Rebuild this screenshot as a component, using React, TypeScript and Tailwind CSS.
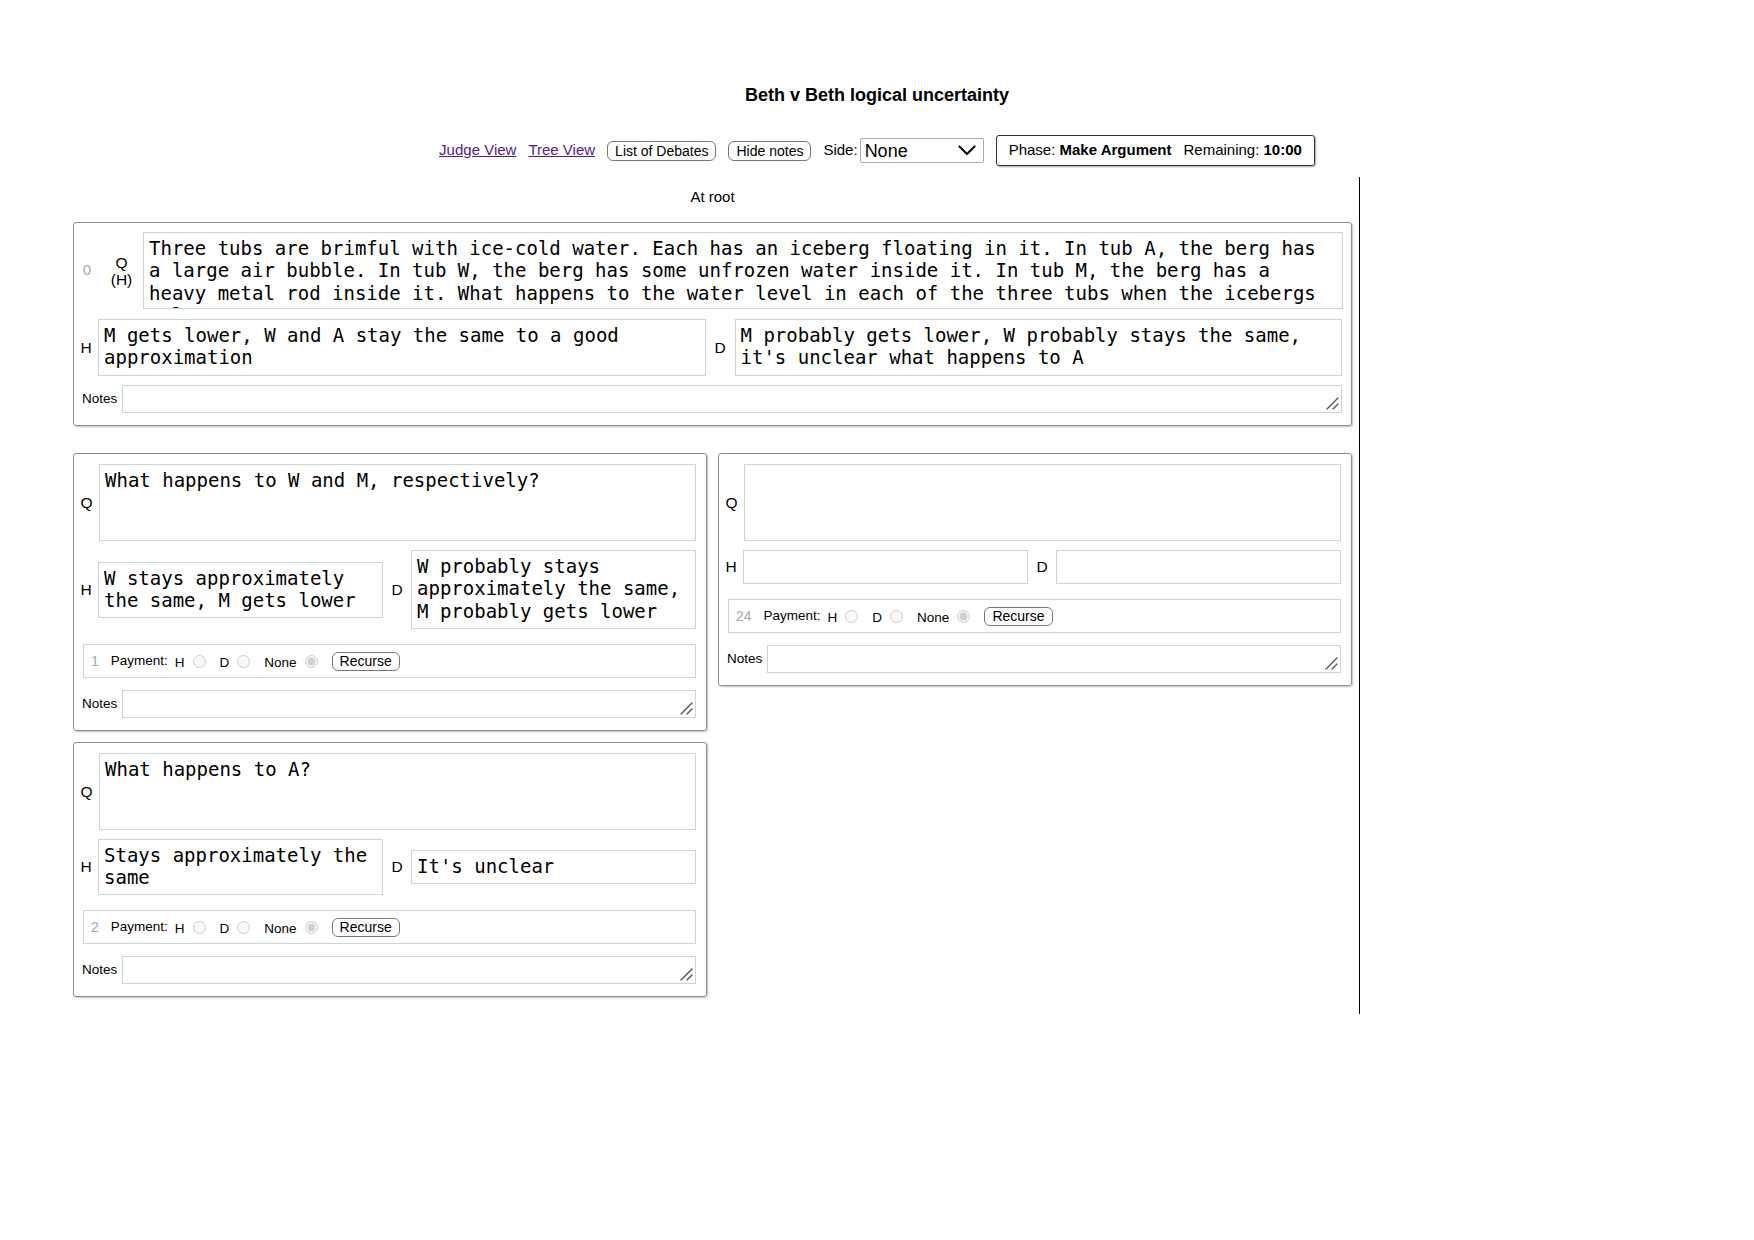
import { useState } from 'react';

type Child = {
  id: number;
  q: string;
  h: string;
  d: string;
  hLines: number;
  dLines: number;
};

// heights of auto-sized answer boxes, by number of text lines
const answerHeight: Record<number, string> = {
  1: 'h-[34px]',
  2: 'h-[56px]',
  3: 'h-[79px]',
};

const leftChildren: Child[] = [
  {
    id: 1,
    q: 'What happens to W and M, respectively?',
    h: 'W stays approximately the same, M gets lower',
    d: 'W probably stays approximately the same, M probably gets lower',
    hLines: 2,
    dLines: 3,
  },
  {
    id: 2,
    q: 'What happens to A?',
    h: 'Stays approximately the same',
    d: "It's unclear",
    hLines: 2,
    dLines: 1,
  },
];

const emptyChild: Child = { id: 24, q: '', h: '', d: '', hLines: 1, dLines: 1 };

const rootQuestion =
  'Three tubs are brimful with ice-cold water. Each has an iceberg floating in it. In tub A, the berg has a large air bubble. In tub W, the berg has some unfrozen water inside it. In tub M, the berg has a heavy metal rod inside it. What happens to the water level in each of the three tubs when the icebergs melt?';

function Field({ value, className }: { value: string; className: string }) {
  return (
    <textarea
      readOnly
      value={value}
      className={`block min-w-0 resize-none overflow-hidden border border-[#c6d7d4] bg-white px-[5px] pt-[4px] pb-[6px] font-['DejaVu_Sans_Mono',monospace] text-[19px] leading-[22.4px] text-black outline-none ${className}`}
    />
  );
}

function NotesRow({ className }: { className: string }) {
  return (
    <div className={`flex items-center ${className}`}>
      <span className="w-[48px] shrink-0 pl-[8px] text-[13.5px]">Notes</span>
      <div className="relative min-w-0 flex-1">
        <textarea className="block h-[28px] w-full resize-none border border-[#c6d7d4] bg-white outline-none" />
        {/* resize grip */}
        <svg className="absolute right-[3px] bottom-[3px]" width="13" height="13" viewBox="0 0 13 13" stroke="#555" strokeWidth="1.4" strokeLinecap="round">
          <line x1="1" y1="12" x2="12" y2="1" />
          <line x1="7" y1="12" x2="12" y2="7" />
        </svg>
      </div>
    </div>
  );
}

function Radio({ name, checked }: { name: string; checked?: boolean }) {
  return (
    <input
      type="radio"
      name={name}
      disabled
      defaultChecked={checked}
      className="m-0 ml-[8px] h-[13px] w-[13px]"
    />
  );
}

function PaymentRow({ id }: { id: number }) {
  const name = `pay-${id}`;
  return (
    <div className="mt-[15px] ml-[9px] flex h-[34px] items-center border border-[#c6d7d4] pl-[7px] text-[13.5px]">
      <span className="text-[14px] text-[#a8a8a8]">{id}</span>
      <span className="ml-[12px]">Payment:</span>
      <span className="ml-[7px] pt-[4px]">H</span>
      <Radio name={name} />
      <span className="ml-[14px] pt-[4px]">D</span>
      <Radio name={name} />
      <span className="ml-[14px] pt-[4px]">None</span>
      <Radio name={name} checked />
      <button className="ml-[14px] rounded-[6px] border border-[#777] bg-white px-[7px] text-[14px] leading-[17px]">
        Recurse
      </button>
    </div>
  );
}

function ChildBox({ node }: { node: Child }) {
  return (
    <div className="rounded-[3px] border border-[#8f8f8f] pt-[10px] pr-[10px] pb-[12px] shadow-[1px_1px_2px_rgba(0,0,0,0.25)]">
      <div className="flex items-center">
        <span className="w-[25px] shrink-0 text-center text-[15.5px]">Q</span>
        <Field value={node.q} className="h-[77px] flex-1" />
      </div>
      <div className="mt-[9px] flex items-center">
        <span className="w-[24px] shrink-0 text-center text-[15.5px]">H</span>
        <Field value={node.h} className={`flex-1 ${answerHeight[node.hLines]}`} />
        <span className="w-[28px] shrink-0 text-center text-[15.5px]">D</span>
        <Field value={node.d} className={`flex-1 ${answerHeight[node.dLines]}`} />
      </div>
      <PaymentRow id={node.id} />
      <NotesRow className="mt-[12px]" />
    </div>
  );
}

function SideSelect() {
  return (
    <div className="flex items-center gap-[2px]">
      <span className="text-[15px]">Side:</span>
      <div className="flex h-[25px] w-[124px] items-center justify-between rounded-[2px] border border-[#aaa] bg-white pr-[7px] pl-[4px]">
        <span className="text-[18px] leading-[20px]">None</span>
        <svg width="18" height="11" viewBox="0 0 18 11" fill="none" stroke="#111" strokeWidth="2.2" strokeLinecap="round" strokeLinejoin="round">
          <polyline points="1.5,1.5 9,9 16.5,1.5" />
        </svg>
      </div>
    </div>
  );
}

export default function App() {
  const [showNotes] = useState(true);

  return (
    <div className="min-h-[1240px] w-[1754px] bg-white font-['Liberation_Sans',Arial,sans-serif] text-black">
      <h1 className="pt-[84px] text-center text-[18px] leading-[22px] font-bold">Beth v Beth logical uncertainty</h1>

      {/* top bar */}
      <div className="mt-[29px] flex h-[31px] items-center justify-center gap-[12px]">
        <a href="#" className="text-[15px] text-[#551a8b] underline">Judge View</a>
        <a href="#" className="text-[15px] text-[#551a8b] underline">Tree View</a>
        <button className="rounded-[6px] border border-[#777] bg-white px-[7px] text-[14px] leading-[18px]">List of Debates</button>
        <button className="rounded-[6px] border border-[#777] bg-white px-[7px] text-[14px] leading-[18px]">
          {showNotes ? 'Hide notes' : 'Show notes'}
        </button>
        <SideSelect />
        <div className="flex h-[31px] items-center gap-[12px] rounded-[3px] border border-[#333] px-[12px] text-[15px] shadow-[1px_1px_2px_rgba(0,0,0,0.35)]">
          <span>
            Phase: <b>Make Argument</b>
          </span>
          <span>
            Remaining: <b>10:00</b>
          </span>
        </div>
      </div>

      <div className="mt-[11px] flex">
        <div className="ml-[73px] w-[1279px] pb-[17px]">
          <div className="pt-[11px] text-center text-[15px] leading-[17px]">At root</div>

          {/* root node */}
          <div className="mt-[17px] rounded-[3px] border border-[#8f8f8f] pt-[9px] pb-[12px] shadow-[1px_1px_2px_rgba(0,0,0,0.25)]">
            <div className="flex items-center pr-[8px]">
              <span className="w-[26px] shrink-0 text-center text-[15px] text-[#a8a8a8]">0</span>
              <span className="w-[43px] shrink-0 text-center text-[15.5px] leading-[17px]">
                Q
                <br />
                (H)
              </span>
              <Field value={rootQuestion} className="h-[77px] flex-1" />
            </div>
            <div className="mt-[10px] flex items-center pr-[9px]">
              <span className="w-[24px] shrink-0 text-center text-[15.5px]">H</span>
              <Field value="M gets lower, W and A stay the same to a good approximation" className="h-[57px] flex-1" />
              <span className="w-[29px] shrink-0 text-center text-[15.5px]">D</span>
              <Field value="M probably gets lower, W probably stays the same, it's unclear what happens to A" className="h-[57px] flex-1" />
            </div>
            <NotesRow className="mt-[9px] pr-[9px]" />
          </div>

          {/* children */}
          <div className="mt-[27px] grid grid-cols-2 items-start gap-x-[11px]">
            <div className="flex flex-col gap-[11px]">
              {leftChildren.map((c) => (
                <ChildBox key={c.id} node={c} />
              ))}
            </div>
            <div className="flex flex-col">
              <ChildBox node={emptyChild} />
            </div>
          </div>
        </div>
        <div className="ml-[7px] border-l border-black" />
      </div>
    </div>
  );
}
